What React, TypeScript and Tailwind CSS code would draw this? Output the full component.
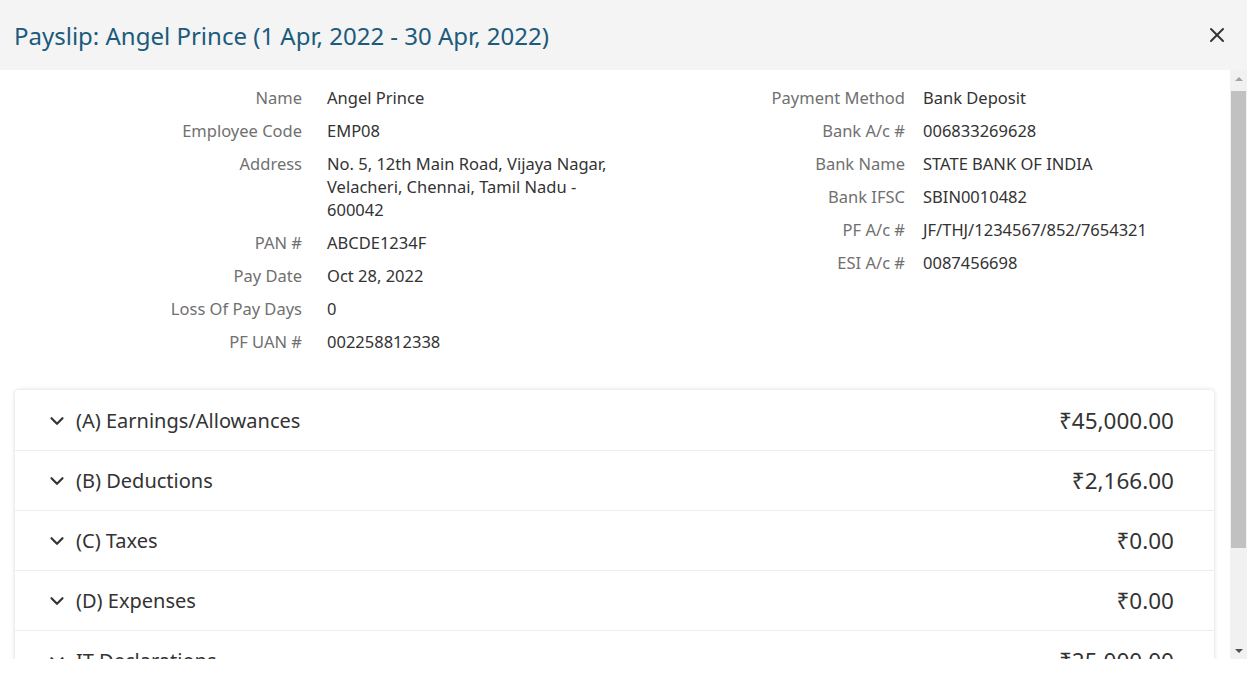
import { ChevronDown, X } from "lucide-react";

type Field = { label: string; value: string };

const leftFields: Field[] = [
  { label: "Name", value: "Angel Prince" },
  { label: "Employee Code", value: "EMP08" },
  { label: "Address", value: "No. 5, 12th Main Road, Vijaya Nagar, Velacheri, Chennai, Tamil Nadu - 600042" },
  { label: "PAN #", value: "ABCDE1234F" },
  { label: "Pay Date", value: "Oct 28, 2022" },
  { label: "Loss Of Pay Days", value: "0" },
  { label: "PF UAN #", value: "002258812338" },
];

const rightFields: Field[] = [
  { label: "Payment Method", value: "Bank Deposit" },
  { label: "Bank A/c #", value: "006833269628" },
  { label: "Bank Name", value: "STATE BANK OF INDIA" },
  { label: "Bank IFSC", value: "SBIN0010482" },
  { label: "PF A/c #", value: "JF/THJ/1234567/852/7654321" },
  { label: "ESI A/c #", value: "0087456698" },
];

const sections = [
  { title: "(A) Earnings/Allowances", amount: "₹45,000.00" },
  { title: "(B) Deductions", amount: "₹2,166.00" },
  { title: "(C) Taxes", amount: "₹0.00" },
  { title: "(D) Expenses", amount: "₹0.00" },
  { title: "IT Declarations", amount: "₹25,000.00" },
];

function FieldList({ fields, labelW, gap }: { fields: Field[]; labelW: string; gap: string }) {
  return (
    <div className="flex flex-col">
      {fields.map((f) => (
        <div key={f.label} className="flex py-[5px] leading-[23px]">
          <div className={`${labelW} shrink-0 text-right text-[#707070]`}>{f.label}</div>
          <div className={`${gap} flex-1 text-[#333333]`}>{f.value}</div>
        </div>
      ))}
    </div>
  );
}

export default function App() {
  return (
    <div className="w-[1247px] h-[686px] bg-white overflow-hidden font-['Noto_Sans','Open_Sans',sans-serif]">
      {/* header */}
      <div className="h-[70px] bg-[#f4f4f4] flex items-center justify-between pl-[14px] pr-[18px]">
        <h1 className="text-[24px] text-[#1b5b7c] pt-[1px]">
          Payslip: Angel Prince (1 Apr, 2022 - 30 Apr, 2022)
        </h1>
        <X size={24} strokeWidth={2} className="text-[#333333]" />
      </div>

      {/* body */}
      <div className="h-[589px] flex">
        <div className="flex-1 overflow-hidden">
          <div className="flex pt-[11px] text-[16.5px]">
            <div className="w-[615px]">
              <FieldList fields={leftFields} labelW="w-[302px]" gap="pl-[25px]" />
            </div>
            <div className="flex-1">
              <FieldList fields={rightFields} labelW="w-[290px]" gap="pl-[18px]" />
            </div>
          </div>

          <div className="ml-[15px] mr-[16px] mt-[32px] bg-white rounded-t-[4px] shadow-[0_0_4px_rgba(0,0,0,0.16)]">
            {sections.map((s, i) => (
              <div
                key={s.title}
                className={`h-[60px] flex items-center justify-between pl-[31px] pr-[40px] border-t ${
                  i > 0 ? "border-[#ededed]" : "border-transparent"
                }`}
              >
                <div className="flex items-center gap-[8px] text-[20px] text-[#333333]">
                  <ChevronDown size={22} strokeWidth={2.4} className="text-[#333333]" />
                  <span>{s.title}</span>
                </div>
                <div className="text-[22.5px] text-[#333333]">{s.amount}</div>
              </div>
            ))}
          </div>
        </div>

        {/* scrollbar */}
        <div className="w-[17px] bg-[#f1f1f1] flex flex-col items-center">
          <div className="h-[17px] flex items-center justify-center">
            <div className="w-0 h-0 border-x-[4px] border-x-transparent border-b-[4px] border-b-[#a3a3a3]" />
          </div>
          <div className="w-[15px] h-[457px] bg-[#c1c1c1] mt-[4px]" />
          <div className="flex-1" />
          <div className="h-[17px] flex items-center justify-center">
            <div className="w-0 h-0 border-x-[4px] border-x-transparent border-t-[4px] border-t-[#505050]" />
          </div>
        </div>
      </div>
    </div>
  );
}
